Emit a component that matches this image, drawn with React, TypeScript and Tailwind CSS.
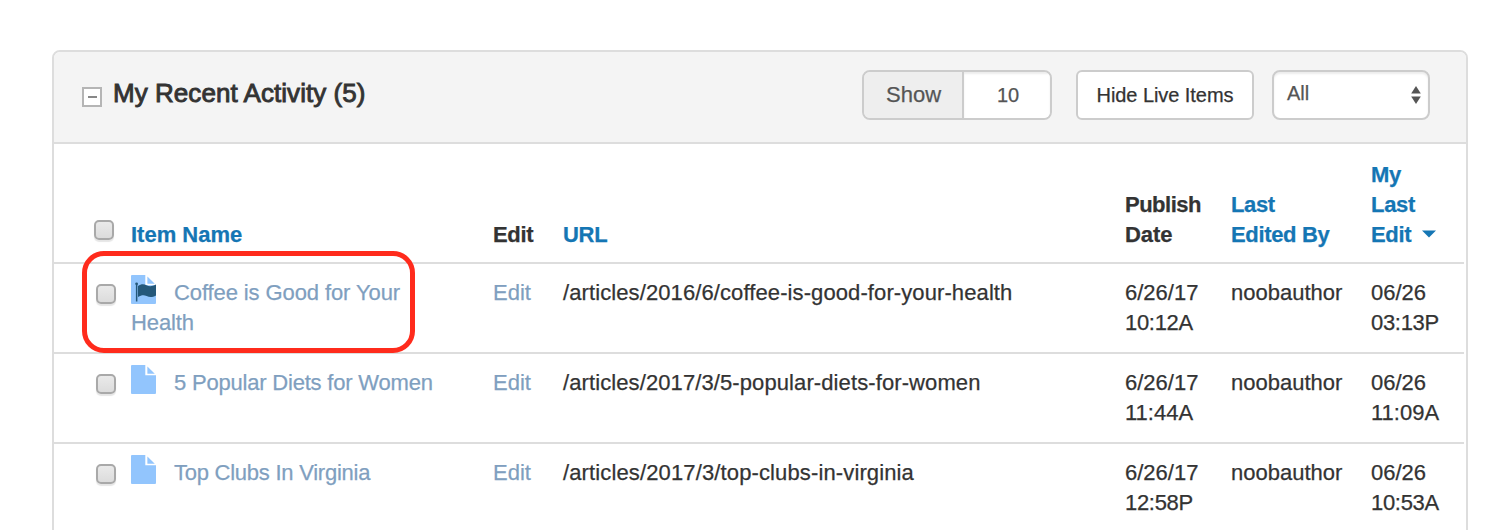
import React from "react";

type Activity = {
  name: string;
  nameClass: string;
  flagged?: boolean;
  url: string;
  urlClass: string;
  published: [string, string];
  author: string;
  edited: [string, string];
};

const rows: Activity[] = [
  {
    name: "Coffee is Good for Your Health",
    nameClass: "tracking-[-0.1px]",
    flagged: true,
    url: "/articles/2016/6/coffee-is-good-for-your-health",
    urlClass: "tracking-[0.1px]",
    published: ["6/26/17", "10:12A"],
    author: "noobauthor",
    edited: ["06/26", "03:13P"],
  },
  {
    name: "5 Popular Diets for Women",
    nameClass: "tracking-[-0.2px]",
    url: "/articles/2017/3/5-popular-diets-for-women",
    urlClass: "tracking-[0.1px]",
    published: ["6/26/17", "11:44A"],
    author: "noobauthor",
    edited: ["06/26", "11:09A"],
  },
  {
    name: "Top Clubs In Virginia",
    nameClass: "tracking-[-0.25px]",
    url: "/articles/2017/3/top-clubs-in-virginia",
    urlClass: "tracking-[0.13px]",
    published: ["6/26/17", "12:58P"],
    author: "noobauthor",
    edited: ["06/26", "10:53A"],
  },
];

const columns = "grid grid-cols-[77px_362px_70px_562px_106px_140px_93px]";

function Checkbox({ className }: { className: string }) {
  return (
    <span
      role="checkbox"
      aria-checked="false"
      className={`block h-5 w-5 rounded-[5px] border-2 border-[#a9a9a9] bg-gradient-to-b from-[#eaeaea] to-[#dcdcdc] shadow-[0_2px_1px_rgba(0,0,0,0.1)] ${className}`}
    />
  );
}

function FileIcon({ flagged }: { flagged?: boolean }) {
  return (
    <svg width="25" height="29" viewBox="0 0 25 29" className="-mt-[11px] mr-[18px] inline-block align-[-4px]">
      <path d="M1 0H14.3V10.3H25V28a1 1 0 0 1-1 1H1a1 1 0 0 1-1-1V1a1 1 0 0 1 1-1Z" fill="#92c5fd" />
      <path d="M16.4 1.5L23.8 8.7H16.4Z" fill="#92c5fd" />
      {flagged && (
        <g fill="#24587a">
          <circle cx="5.6" cy="8.8" r="1.4" />
          <rect x="4.9" y="9" width="1.5" height="17.5" />
          <path d="M7 11C10 9 12.6 8.800 15.500 10.300C18.500 11.800 21 11.600 25 9.600V20.400C21.500 22.400 18.600 22.600 15.600 21C12.600 19.600 10.200 20.200 7 22Z" />
        </g>
      )}
    </svg>
  );
}

function Stamp({ value }: { value: [string, string] }) {
  return (
    <span>
      {value[0]}
      <br />
      <span className={value[1].startsWith("11") ? "tracking-[0px]" : "tracking-[-0.3px]"}>{value[1]}</span>
    </span>
  );
}

export default function App() {
  return (
    <div className="h-[530px] overflow-hidden bg-white pt-[50px] pl-[52px] font-['Liberation_Sans',Arial,sans-serif] text-[22px] leading-[30px] text-[#333] [-webkit-text-stroke:0.25px_currentColor]">
      <section className="h-[500px] w-[1416px] rounded-t-[8px] border-2 border-[#ddd]">
        <header className="flex h-[92px] items-start rounded-t-[6px] border-b-2 border-[#ddd] bg-[#f4f4f4] pt-[18px] pl-7">
          <span className="mt-[17px] flex h-5 w-5 items-center justify-center border-2 border-[#b5b5b5] bg-white">
            <span className="h-[2px] w-[9px] bg-[#888]" />
          </span>
          <h2 className="ml-[11px] mt-[8px] w-[749px] whitespace-nowrap text-[26px] font-normal tracking-[0.05px] [-webkit-text-stroke:0.9px_#333]">
            My Recent Activity (5)
          </h2>
          <div className="flex h-[50px] w-[190px] overflow-hidden rounded-[8px] border-2 border-[#ccc] text-[#555]">
            <span className="w-[100px] border-r-2 border-[#ccc] bg-[#eee] pt-[8px] pl-[22px]">Show</span>
            <span className="flex-1 bg-white pt-[8px] pl-[2px] text-center text-[20px] shadow-[inset_0_2px_2px_rgba(0,0,0,0.075)]">
              10
            </span>
          </div>
          <button className="ml-6 h-[50px] w-[178px] rounded-[6px] border-2 border-[#ccc] bg-white text-[20px] tracking-[-0.06px] whitespace-nowrap">
            Hide Live Items
          </button>
          <div className="ml-[18px] flex h-[50px] w-[158px] items-start justify-between rounded-[8px] border-2 border-[#ccc] bg-white pt-[6px] pr-[7px] pl-[13px] text-[20px] text-[#555] shadow-[inset_0_2px_2px_rgba(0,0,0,0.075)]">
            <span>All</span>
            <svg width="10" height="18" viewBox="0 0 10 18" className="mt-2" fill="#555">
              <path d="M5 0L9.800 7.400H.2Z" />
              <path d="M.2 10.600H9.800L5 18Z" />
            </svg>
          </div>
        </header>

        <div className="w-[1410px]">
          <div className={`${columns} h-[120px] items-end border-b-2 border-[#ddd] pb-[12px] font-bold`}>
            <Checkbox className="mb-[10px] ml-10" />
            <span className="text-[#1576b4]">Item Name</span>
            <span className="tracking-[-0.3px]">Edit</span>
            <span className="tracking-[-0.3px] text-[#1576b4]">URL</span>
            <span className="tracking-[-0.5px]">
              Publish
              <br />
              <span className="tracking-[-0.1px]">Date</span>
            </span>
            <span className="tracking-[-0.35px] text-[#1576b4]">
              Last
              <br />
              Edited By
            </span>
            <span className="tracking-[-0.3px] text-[#1576b4]">
              My
              <br />
              Last
              <br />
              Edit
              <svg width="14" height="8" viewBox="0 0 14 8" className="ml-[11px] inline-block align-[4px]">
                <path d="M0 .5H14L7 7.500Z" fill="#1576b4" />
              </svg>
            </span>
          </div>

          {rows.map((row) => (
            <div key={row.url} className={`${columns} relative h-[90px] border-b-2 border-[#ddd] pt-[14px]`}>
              <Checkbox className="mt-[6px] ml-[42px]" />
              <span className={`w-[320px] text-[#7f9fbf] ${row.nameClass}`}>
                <FileIcon flagged={row.flagged} />
                {row.name}
              </span>
              <span className="text-[#7f9fbf]">Edit</span>
              <span className={row.urlClass}>{row.url}</span>
              <Stamp value={row.published} />
              <span>{row.author}</span>
              <Stamp value={row.edited} />
              {row.flagged && (
                <div className="pointer-events-none absolute -top-[13px] left-[28px] h-[102px] w-[333px] rounded-[22px] border-[5px] border-[#ff2b1c]" />
              )}
            </div>
          ))}
        </div>
      </section>
    </div>
  );
}
